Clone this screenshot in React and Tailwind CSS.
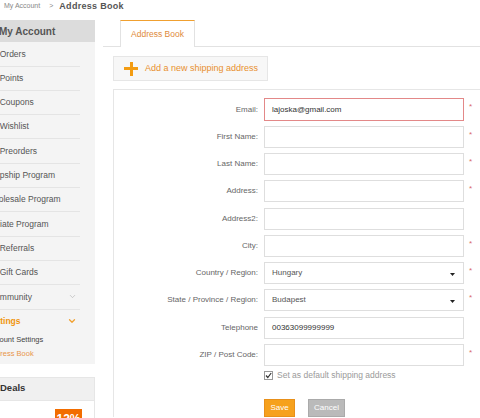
import React from 'react';
import { ChevronDown } from 'lucide-react';

const menu = [
    'My Orders',
    'My Points',
    'My Coupons',
    'My Wishlist',
    'My Preorders',
    'Dropship Program',
    'Wholesale Program',
    'Affiliate Program',
    'My Referrals',
    'My Gift Cards',
];

const fields = [
    { label: 'Email:', value: 'lajoska@gmail.com', required: true, error: true },
    { label: 'First Name:', required: true },
    { label: 'Last Name:', required: true },
    { label: 'Address:', required: true },
    { label: 'Address2:' },
    { label: 'City:', required: true },
    { label: 'Country / Region:', value: 'Hungary', required: true, select: true },
    { label: 'State / Province / Region:', value: 'Budapest', required: true, select: true },
    { label: 'Telephone', value: '00363099999999' },
    { label: 'ZIP / Post Code:', required: true },
];

const Caret = () => (
    <svg width="5" height="3" viewBox="0 0 5 3" className="absolute right-[8px] top-[10px]">
        <path d="M0 0 L5 0 L2.5 3 Z" fill="#222" />
    </svg>
);

const App = () => {
    return (
        <div className="w-[480px] h-[418px] overflow-hidden bg-white font-['Liberation_Sans',Arial,sans-serif]">
            {/* breadcrumb */}
            <div className="h-[20px] flex items-start pl-[4px] pt-[1px] leading-[10px]">
                <span className="text-[7px] text-[#888]">My Account</span>
                <span className="text-[7px] text-[#888] ml-[9px]">&gt;</span>
                <span className="text-[9px] font-bold text-[#555] ml-[6px] tracking-[0.3px]">Address Book</span>
            </div>

            <div className="flex">
                {/* sidebar */}
                <aside className="w-[115px] -ml-[20px] shrink-0">
                    <div className="bg-[#f4f4f4] pb-[3px]">
                        <div className="h-[22.3px] bg-[#dcdcdc] pl-[19px] flex items-center text-[10px] font-bold text-[#555]">
                            My Account
                        </div>
                        {menu.map((item) => (
                            <div key={item} className="h-[24.3px] mr-[15px] border-b border-[#e4e4e4] flex items-center pl-[6px] text-[8.5px] text-[#555]">
                                {item}
                            </div>
                        ))}
                        <div className="h-[24.3px] mr-[15px] border-b border-[#e4e4e4] flex items-center justify-between pl-[9px] pr-[3px] text-[8.5px] text-[#555]">
                            Community
                            <ChevronDown size={9} strokeWidth={1.5} color="#aaa" />
                        </div>
                        <div className="h-[23px] mr-[15px] flex items-center justify-between pl-[7px] pr-[3px] text-[8.5px] font-bold text-[#f0940c]">
                            Settings
                            <ChevronDown size={10} strokeWidth={3} color="#f0a030" />
                        </div>
                        <div className="pl-[7px] text-[7.5px] leading-[14px]">
                            <div className="text-[#444]">Account Settings</div>
                            <div className="text-[#e8954a]">Address Book</div>
                        </div>
                    </div>

                    <div className="mt-[13px] border border-[#e6e6e6]">
                        <div className="h-[23px] bg-[#f0f0f0] border-b border-[#e6e6e6] flex items-center pl-[19px] text-[9.5px] font-bold text-[#333]">
                            Deals
                        </div>
                        <div className="h-[30px] bg-white pt-[8px] pl-[74px]">
                            <div className="w-[27px] h-[20px] bg-[#f26d00] text-white text-[12px] font-bold flex items-center justify-center">
                                12%
                            </div>
                        </div>
                    </div>
                </aside>

                {/* main */}
                <main className="flex-1 pl-[8px] min-w-0">
                    <div className="h-[27px] border-b border-[#e2e2e2] flex">
                        <div className="ml-[17px] w-[75px] h-[27px] bg-white border-t border-t-[#f0a030] border-x border-x-[#e2e2e2] flex items-center justify-center text-[8.5px] text-[#e08a3a]">
                            Address Book
                        </div>
                    </div>

                    <div className="mt-[9px] ml-[10px] w-[155px] h-[25px] bg-[#f7f7f7] border border-[#e6e6e6] flex items-center">
                        <div className="relative w-[14px] h-[14px] ml-[10px]">
                            <div className="absolute left-0 top-[5.5px] w-[14px] h-[3px] bg-[#f39c12]" />
                            <div className="absolute top-0 left-[5.5px] w-[3px] h-[14px] bg-[#f39c12]" />
                        </div>
                        <span className="ml-[7px] text-[9px] text-[#e8902e]">Add a new shipping address</span>
                    </div>

                    <div className="mt-[8px] ml-[10px] w-[420px] border-t border-l border-[#e6e6e6] pt-[8px]">
                        {fields.map((f, i) => (
                            <div
                                key={f.label}
                                className={`flex items-center ${i === 0 ? 'h-[23px] mb-[4.7px]' : 'h-[22px] mb-[5.3px]'}`}
                            >
                                <div className="w-[144px] text-right text-[8px] text-[#666]">{f.label}</div>
                                <div
                                    className={`relative ml-[6px] w-[200px] h-full bg-white flex items-center pl-[7px] text-[8px] ${
                                        f.select ? 'text-[#555]' : 'text-[#333]'
                                    } ${f.error ? 'border-[1.5px] border-[#e38888]' : 'border border-[#dedede]'}`}
                                >
                                    {f.value}
                                    {f.select && <Caret />}
                                </div>
                                {f.required && (
                                    <span className="ml-[5px] text-[8px] text-[#d86a6a] self-start mt-[3px]">*</span>
                                )}
                            </div>
                        ))}

                        <div className="flex items-center ml-[150px] mt-[0px] h-[9px]">
                            <span className="w-[9px] h-[9px] border border-[#999] bg-white flex items-center justify-center">
                                <svg width="7" height="7" viewBox="0 0 7 7">
                                    <path d="M1 3.5 L2.8 5.5 L6.2 1" stroke="#333" strokeWidth="1.2" fill="none" />
                                </svg>
                            </span>
                            <span className="ml-[4px] text-[8.5px] text-[#9a9a9a]">Set as default shipping address</span>
                        </div>

                        <div className="flex ml-[150px] mt-[19px] gap-[12.7px]">
                            <button className="w-[31px] h-[18px] bg-[#f6a11d] text-white text-[8px] border border-[#e8901a]">Save</button>
                            <button className="w-[37.6px] h-[18px] bg-[#bababa] text-white text-[8px] border border-[#aaa]">Cancel</button>
                        </div>
                    </div>
                </main>
            </div>
        </div>
    );
};

export default App;
